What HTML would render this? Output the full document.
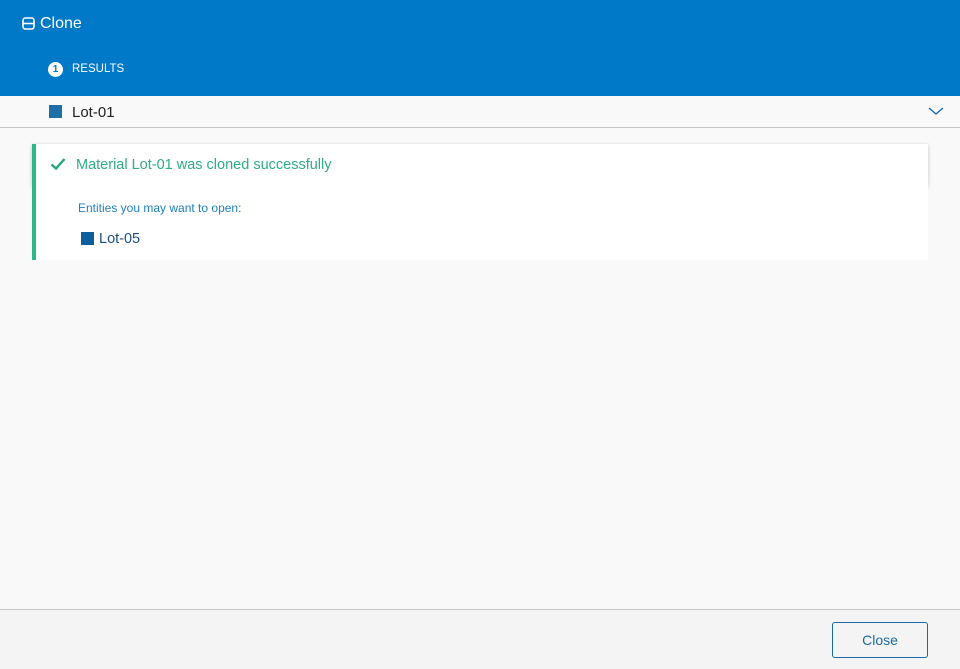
<!DOCTYPE html>
<html><head><style>
*{margin:0;padding:0;box-sizing:border-box}
body{width:960px;height:669px;background:#f9f9f9;font-family:"Liberation Sans",sans-serif;position:relative;overflow:hidden}
.hdr{position:absolute;left:0;top:0;width:960px;height:96px;background:#0079c8;color:#fff}
.title{position:absolute;left:40px;top:15px;font-size:16px}
.res{position:absolute;left:72px;top:63px;font-size:11.5px}
.num{position:absolute;left:48px;top:62px;width:15px;height:15px;border-radius:50%;background:#fff;color:#0079c8;font-size:10px;text-align:center;line-height:15px;font-weight:bold}
.bar{position:absolute;left:0;top:96px;width:960px;height:32px;border-bottom:1px solid #c8c8c8;background:#f9f9f9}
.sq{position:absolute;width:13px;height:13px;background:#1e6fa8}
.card{position:absolute;left:32px;top:144px;width:896px;height:42px;background:#fff;border-left:4px solid #2db888;box-shadow:0 1px 4px rgba(0,0,0,.2)}
.card2{position:absolute;left:32px;top:186px;width:896px;height:74px;background:#fff;border-left:4px solid #2db888}
.foot{position:absolute;left:0;top:609px;width:960px;height:60px;background:#f4f4f4;border-top:1px solid #c8c8c8}
.btn{position:absolute;left:832px;top:622px;width:96px;height:36px;border:1px solid #1b6aa5;border-radius:3px;color:#1b6aa5;font-size:14px;text-align:center;line-height:34px;background:#f4f4f4}
</style></head><body>
<div class="hdr">
<svg style="position:absolute;left:22px;top:17px" width="13" height="13" viewBox="0 0 13 13"><rect x="1" y="1" width="11" height="11" rx="2.5" fill="none" stroke="#fff" stroke-width="1.6"/><line x1="1" y1="6.5" x2="12" y2="6.5" stroke="#fff" stroke-width="1.6"/></svg>
<div class="title">Clone</div>
<div class="num">1</div><div class="res">RESULTS</div>
</div>
<div class="bar">
<div class="sq" style="left:49px;top:9px"></div>
<div style="position:absolute;left:72px;top:8px;font-size:15px;color:#222">Lot-01</div>
<svg style="position:absolute;left:928px;top:10px" width="16" height="10" viewBox="0 0 16 10"><path d="M1 2 L8 8 L15 2" fill="none" stroke="#1b6aa5" stroke-width="1.4"/></svg>
</div>
<div class="card">
<svg style="position:absolute;left:14px;top:13px" width="16" height="14" viewBox="0 0 16 14"><path d="M1.5 7.5 L6 11.5 L14.5 2" fill="none" stroke="#2aa57e" stroke-width="2.4"/></svg>
<div style="position:absolute;left:40px;top:13px;font-size:14.5px;color:#2fad84">Material Lot-01 was cloned successfully</div>
</div>
<div class="card2">
<div style="position:absolute;left:42px;top:15px;font-size:12px;color:#1e7fc0">Entities you may want to open:</div>
<div class="sq" style="left:45px;top:46px;background:#0e5f9f"></div>
<div style="position:absolute;left:63px;top:45px;font-size:14.5px;color:#1a4f82">Lot-05</div>
</div>
<div class="foot"></div>
<div class="btn">Close</div>
</body></html>
